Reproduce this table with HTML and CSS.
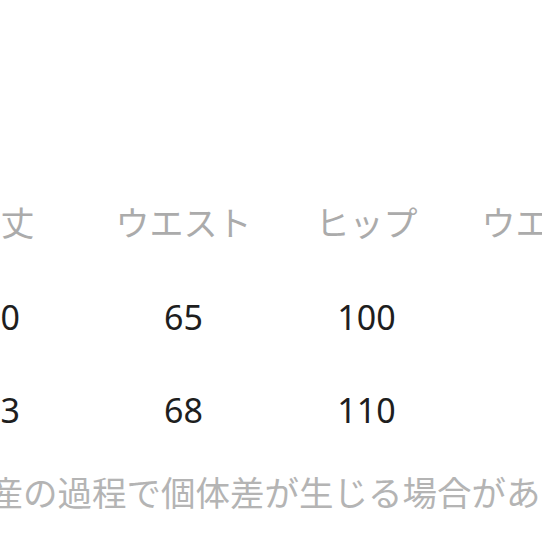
FILE: index.html
```html
<!DOCTYPE html>
<html lang="ja">
<head>
<meta charset="utf-8">
<link rel="stylesheet" href="styles.css">
</head>
<body>
<div class="page">
  <div class="size-table">
    <div class="cell head">着丈</div>
    <div class="cell head">ウエスト</div>
    <div class="cell head">ヒップ</div>
    <div class="cell head">ウエスト</div>

    <div class="cell val">70</div>
    <div class="cell val">65</div>
    <div class="cell val">100</div>
    <div class="cell val"></div>

    <div class="cell val">73</div>
    <div class="cell val">68</div>
    <div class="cell val">110</div>
    <div class="cell val"></div>
  </div>
  <p class="note">生産の過程で個体差が生じる場合があります。</p>
</div>
</body>
</html>
```
FILE: styles.css
```css
html, body {
  margin: 0;
  padding: 0;
  background: #ffffff;
  overflow: hidden;
}
body {
  width: 542px;
  height: 542px;
  font-family: "Noto Sans", "Noto Sans CJK JP", sans-serif;
}
.page {
  padding-top: 175px;
}
.size-table {
  display: grid;
  grid-template-columns: repeat(4, 183px);
  grid-template-rows: 96px 93px 93px;
  margin-left: -91px;
  width: 732px;
}
.cell {
  font-size: 34px;
  text-align: center;
  white-space: nowrap;
}
.head {
  line-height: 96px;
  color: #ababab;
}
.val {
  line-height: 93px;
  color: #1e1e1e;
}
.note {
  margin: 0 0 0 -46px;
  font-size: 34.5px;
  line-height: 72px;
  color: #b4b4b4;
  white-space: nowrap;
}
```
